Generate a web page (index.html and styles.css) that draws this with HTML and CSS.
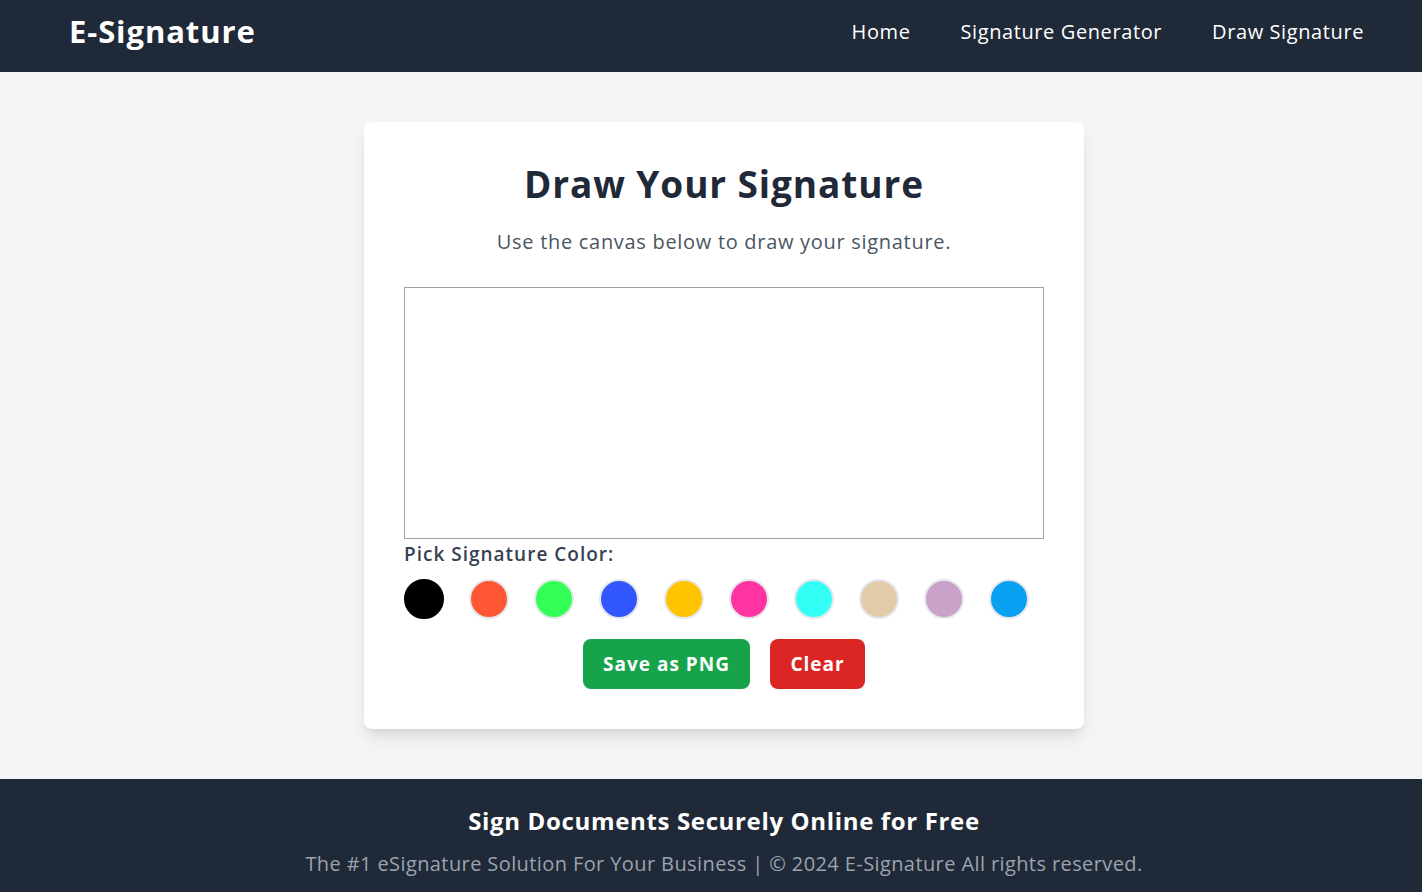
FILE: index.html
```html
<!DOCTYPE html>
<html lang="en">
<head>
<meta charset="UTF-8">
<title>E-Signature - Draw Signature</title>
<link rel="stylesheet" href="styles.css">
</head>
<body>
<header class="site-header">
  <a class="logo" href="#">E-Signature</a>
  <nav class="nav">
    <a href="#">Home</a>
    <a href="#">Signature Generator</a>
    <a href="#">Draw Signature</a>
  </nav>
</header>
<main class="main">
  <section class="card">
    <h1 class="title">Draw Your Signature</h1>
    <p class="subtitle">Use the canvas below to draw your signature.</p>
    <canvas class="pad" width="638" height="250"></canvas>
    <div class="picker">
      <label class="picker-label">Pick Signature Color:</label>
      <div class="swatches">
        <button class="swatch selected" style="background:#000000"></button>
        <button class="swatch" style="background:#ff5733"></button>
        <button class="swatch" style="background:#33ff57"></button>
        <button class="swatch" style="background:#3357ff"></button>
        <button class="swatch" style="background:#ffc300"></button>
        <button class="swatch" style="background:#ff33a1"></button>
        <button class="swatch" style="background:#33fff5"></button>
        <button class="swatch" style="background:#e2cba8"></button>
        <button class="swatch" style="background:#c8a2c8"></button>
        <button class="swatch" style="background:#09a0f2"></button>
      </div>
    </div>
    <div class="actions">
      <button class="btn btn-save">Save as PNG</button>
      <button class="btn btn-clear">Clear</button>
    </div>
  </section>
</main>
<footer class="site-footer">
  <h2 class="footer-title">Sign Documents Securely Online for Free</h2>
  <p class="footer-text">The #1 eSignature Solution For Your Business | © 2024 E-Signature All rights reserved.</p>
</footer>
</body>
</html>
```

FILE: styles.css
```css
* { box-sizing: border-box; }
body {
  margin: 0;
  min-width: 1448px;
  font-family: "Open Sans", "Liberation Sans", sans-serif;
  background: #f3f4f6;
  color: #1f2937;
}
.site-header {
  height: 72px;
  background: #1f2937;
  display: flex;
  align-items: center;
  justify-content: space-between;
  padding: 0 84px 0 69px;
}
.logo {
  color: #fff;
  text-decoration: none;
  font-weight: 700;
  font-size: 31px;
  letter-spacing: 0.9px;
  margin-top: -10px;
}
.nav {
  display: flex;
  gap: 50px;
  margin-top: -10px;
}
.nav a {
  color: #fff;
  text-decoration: none;
  font-size: 20px;
  letter-spacing: 0.6px;
}
.main {
  padding: 50px 0;
  display: flex;
  justify-content: center;
}
.card {
  width: 720px;
  background: #fff;
  border-radius: 8px;
  box-shadow: 0 10px 15px -3px rgba(0,0,0,0.1), 0 4px 6px -4px rgba(0,0,0,0.1);
  padding: 40px;
  display: flex;
  flex-direction: column;
  align-items: center;
}
.title {
  margin: 2px 0 24px;
  font-size: 37px;
  line-height: 40px;
  font-weight: 700;
  letter-spacing: 0.9px;
  color: #1f2937;
}
.subtitle {
  margin: 0 0 31px;
  font-size: 20px;
  line-height: 28px;
  letter-spacing: 0.7px;
  color: #4b5563;
}
.pad {
  display: block;
  width: 640px;
  height: 252px;
  border: 1px solid #9ca3af;
  background: #fff;
}
.picker {
  width: 100%;
  margin-top: 2px;
}
.picker-label {
  display: block;
  font-size: 19px;
  line-height: 26px;
  font-weight: 600;
  letter-spacing: 1px;
  color: #374151;
}
.swatches {
  display: flex;
  gap: 25px;
  margin-top: 12px;
}
.swatch {
  width: 40px;
  height: 40px;
  border-radius: 50%;
  border: 2px solid #e5e7eb;
  padding: 0;
  cursor: pointer;
}
.swatch.selected { border-color: #000; }
.actions {
  display: flex;
  gap: 20px;
  margin-top: 20px;
}
.btn {
  height: 50px;
  border: 0;
  border-radius: 8px;
  color: #fff;
  font-family: inherit;
  font-size: 19px;
  font-weight: 700;
  letter-spacing: 1px;
  padding: 0;
  cursor: pointer;
}
.btn-save { background: #16a34a; width: 167px; }
.btn-clear { background: #dc2626; width: 95px; }
.site-footer {
  background: #1f2937;
  text-align: center;
  padding: 26px 0 14px;
}
.footer-title {
  margin: 0 0 13px;
  font-size: 24px;
  line-height: 32px;
  font-weight: 700;
  letter-spacing: 0.65px;
  color: #fff;
}
.footer-text {
  margin: 0;
  font-size: 20px;
  line-height: 28px;
  letter-spacing: 0.4px;
  color: #9ca3af;
}
```
